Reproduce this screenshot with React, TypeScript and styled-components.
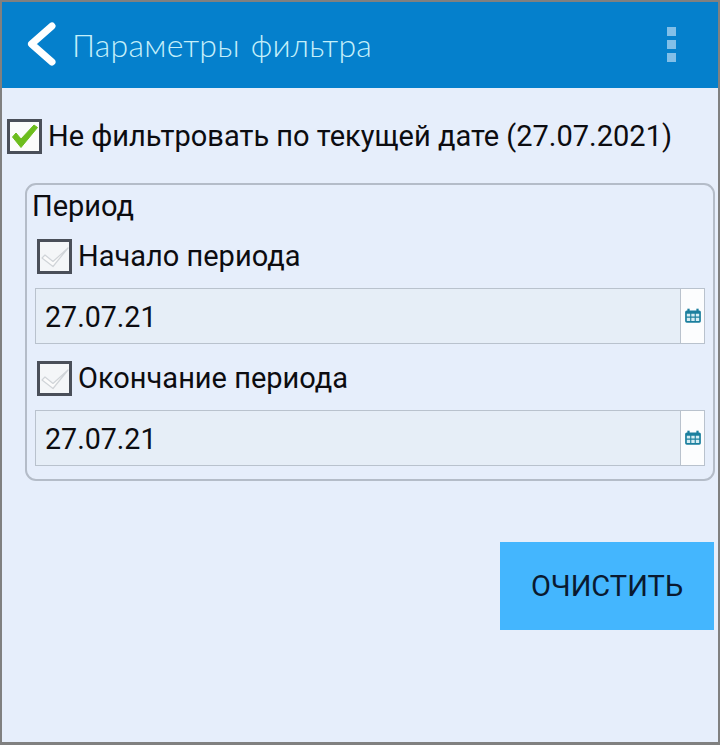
import { createGlobalStyle, styled } from "styled-components";

const GlobalStyle = createGlobalStyle`
  html, body {
    margin: 0;
    padding: 0;
    background: #808080;
  }
  * {
    box-sizing: border-box;
  }
`;

const Screen = styled.div`
  width: 720px;
  height: 745px;
  padding: 2px 2px 3px 2px;
  display: flex;
  flex-direction: column;
  font-family: Roboto, "Liberation Sans", sans-serif;
  color: #0c0c10;
`;

const Header = styled.header`
  height: 86px;
  flex: none;
  background: #0580cc;
  display: flex;
  align-items: center;
  padding: 0 42px 2px 25px;
`;

const Title = styled.h1`
  flex: 1;
  margin: 0 0 0 9px;
  font-family: Lato, sans-serif;
  font-weight: 300;
  font-size: 32px;
  letter-spacing: 0.25px;
  word-spacing: 2px;
  color: #c4effa;
`;

const MenuDots = styled.div`
  display: flex;
  flex-direction: column;
  gap: 4px;
`;

const Dot = styled.span`
  width: 9px;
  height: 9px;
  background: #82bfe8;
`;

const Content = styled.main`
  flex: 1;
  background: #e6eefb;
  display: flex;
  flex-direction: column;
  padding: 30px 3px 0 5px;
`;

const CheckRow = styled.label`
  display: flex;
  align-items: center;
  gap: 6px;
  font-size: 29px;
  line-height: 36px;
`;

const Box = styled.span<{ $muted?: boolean }>`
  width: 35px;
  height: 35px;
  flex: none;
  border: 3px solid #4a4f59;
  background: ${(p) => (p.$muted ? "#f4f6f8" : "#fbfcfb")};
  display: flex;
  align-items: center;
  justify-content: center;
`;

const Group = styled.section`
  margin: 29px 0 0 18px;
  height: 298px;
  border: 2px solid #b4bcc8;
  border-radius: 11px;
  padding: 3px 8px 0 5px;
`;

const GroupTitle = styled.div`
  font-size: 29px;
  line-height: 36px;
  margin-bottom: 14px;
`;

const Field = styled.div`
  display: flex;
  margin: 0 0 16px 3px;
  height: 56px;
  border: 1px solid #b9c2cd;
  background: #e6eef7;
`;

const FieldValue = styled.div`
  flex: 1;
  font-size: 28.6px;
  line-height: 56px;
  padding-left: 9px;
`;

const FieldButton = styled.div`
  width: 24px;
  flex: none;
  background: #fcfdfe;
  border-left: 1px solid #b9c2cd;
  display: flex;
  align-items: center;
  justify-content: center;
`;

const FieldRow = styled(CheckRow)`
  margin: 0 0 14px 5px;
`;

const Footer = styled.div`
  display: flex;
  justify-content: flex-end;
  margin: 61px 1px 0 0;
`;

const ClearButton = styled.button`
  width: 214px;
  height: 88px;
  border: none;
  background: #44b6fe;
  color: #0a1a30;
  font-family: Roboto, sans-serif;
  font-size: 29px;
`;

function BackIcon() {
  return (
    <svg width="36" height="46" viewBox="0 0 36 46">
      <path d="M25 5 L4.5 23 L25 41" fill="none" stroke="#fff" strokeWidth="7" strokeLinecap="round" strokeLinejoin="round" />
    </svg>
  );
}

function GreenCheck() {
  return (
    <svg width="29" height="29" viewBox="0 0 29 29">
      <path d="M2.5 15 L6 11 L11 17 L24 3 L27.5 5.5 L11 25.5 Z" fill="#6cbd1c" stroke="#6cbd1c" strokeWidth="1" strokeLinejoin="round" />
    </svg>
  );
}

function GreyCheck() {
  return (
    <svg width="29" height="29" viewBox="0 0 29 29">
      <path d="M2 16 L5 13 L13 19.5 L28 6 L13 24.5 Z" fill="#fbfbfb" stroke="#d0d4d8" strokeWidth="1.2" strokeLinejoin="round" />
    </svg>
  );
}

function CalendarIcon() {
  return (
    <svg width="18" height="16" viewBox="0 0 16 14">
      <path d="M1 3.5 Q1 2 2.5 2 H13.5 Q15 2 15 3.5 V11.5 Q15 13 13.5 13 H2.5 Q1 13 1 11.5 Z" fill="#1b7f9e" />
      <rect x="3" y="0.5" width="2" height="3" fill="#1b7f9e" />
      <rect x="11" y="0.5" width="2" height="3" fill="#1b7f9e" />
      <path d="M2.5 5 H5.5 V7.5 H2.5 Z M6.5 5 H9.5 V7.5 H6.5 Z M10.5 5 H13.5 V7.5 H10.5 Z M2.5 8.5 H5.5 V11.5 H2.5 Z M6.5 8.5 H9.5 V11.5 H6.5 Z M10.5 8.5 H13.5 V11.5 H10.5 Z" fill="#d6edf3" />
    </svg>
  );
}

const periodFields = [
  { label: "Начало периода", value: "27.07.21" },
  { label: "Окончание периода", value: "27.07.21" },
];

export default function App() {
  return (
    <Screen>
      <GlobalStyle />
      <Header>
        <BackIcon />
        <Title>Параметры фильтра</Title>
        <MenuDots>
          <Dot />
          <Dot />
          <Dot />
        </MenuDots>
      </Header>
      <Content>
        <CheckRow>
          <Box>
            <GreenCheck />
          </Box>
          Не фильтровать по текущей дате (27.07.2021)
        </CheckRow>
        <Group>
          <GroupTitle>Период</GroupTitle>
          {periodFields.map((field) => (
            <div key={field.label}>
              <FieldRow>
                <Box $muted>
                  <GreyCheck />
                </Box>
                {field.label}
              </FieldRow>
              <Field>
                <FieldValue>{field.value}</FieldValue>
                <FieldButton>
                  <CalendarIcon />
                </FieldButton>
              </Field>
            </div>
          ))}
        </Group>
        <Footer>
          <ClearButton>ОЧИСТИТЬ</ClearButton>
        </Footer>
      </Content>
    </Screen>
  );
}
